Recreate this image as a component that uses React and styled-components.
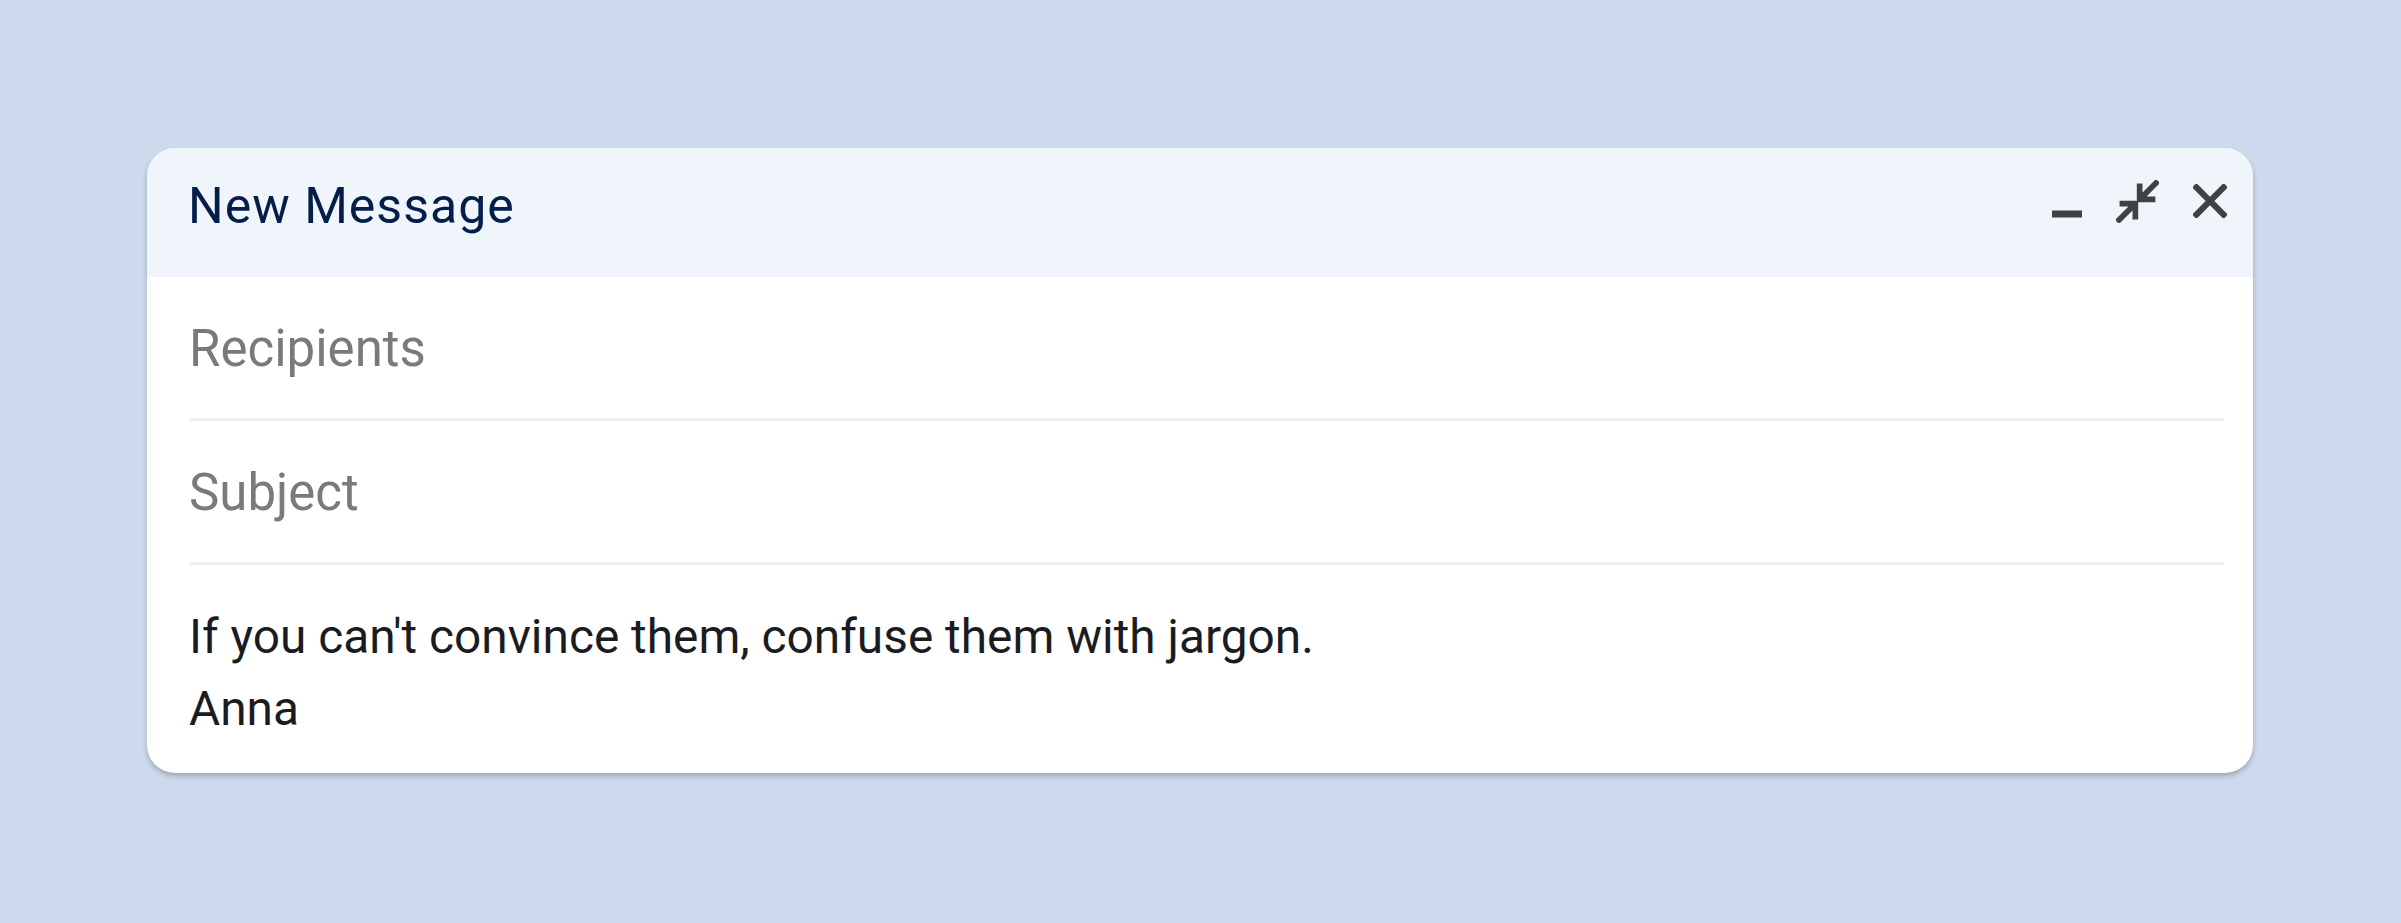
import React from "react";
import styled, { createGlobalStyle } from "styled-components";

const GlobalStyle = createGlobalStyle`
  html, body {
    margin: 0;
    padding: 0;
    background: #cdd9ec;
  }
  body {
    font-family: Roboto, "Liberation Sans", Arial, sans-serif;
  }
`;

const MinimizeIcon = () => (
  <svg width="30" height="34" viewBox="0 0 30 34">
    <rect x="0" y="26.5" width="30" height="7" fill="currentColor" />
  </svg>
);

const ExitFullIcon = () => (
  <svg width="43" height="43" viewBox="80 80 800 800">
    <path
      fill="currentColor"
      stroke="currentColor"
      strokeWidth="26"
      d="M136 880 80 824l264-264H160v-80h320v320h-80V616L136 880Zm344-400V160h80v184l264-264 56 56-264 264h184v80H480Z"
    />
  </svg>
);

const CloseIcon = () => (
  <svg width="34" height="34" viewBox="200 200 560 560">
    <path
      fill="currentColor"
      stroke="currentColor"
      strokeWidth="22"
      d="m256 760-56-56 224-224-224-224 56-56 224 224 224-224 56 56-224 224 224 224-56 56-224-224-224 224Z"
    />
  </svg>
);

const App = () => (
  <React.Fragment>
    <GlobalStyle />
    <Page>
      <Compose>
        <Header>
          <Title>New Message</Title>
          <Actions>
            <IconButton aria-label="Minimize">
              <MinimizeIcon />
            </IconButton>
            <IconButton aria-label="Exit full screen">
              <ExitFullIcon />
            </IconButton>
            <IconButton aria-label="Close">
              <CloseIcon />
            </IconButton>
          </Actions>
        </Header>
        <Fields>
          <Field>
            <Input placeholder="Recipients" />
          </Field>
          <Field>
            <Input placeholder="Subject" />
          </Field>
          <Body>
            If you can't convince them, confuse them with jargon.
            <br />
            Anna
          </Body>
        </Fields>
      </Compose>
    </Page>
  </React.Fragment>
);

export default App;

const Page = styled.div`
  min-height: 923px;
  padding: 148px 148px 0 147px;
  box-sizing: border-box;
`;

const Compose = styled.div`
  width: 2106px;
  background: #ffffff;
  border-radius: 28px;
  overflow: hidden;
  box-shadow: 0 3px 5px rgba(60, 64, 67, 0.32);
`;

const Header = styled.div`
  height: 129px;
  box-sizing: border-box;
  display: flex;
  align-items: flex-start;
  justify-content: space-between;
  padding: 22px 26px 0 41px;
  background: #f0f4fb;
`;

const Title = styled.h2`
  margin: 0;
  font-size: 50px;
  line-height: 72px;
  font-weight: 400;
  letter-spacing: 1px;
  color: #041e49;
`;

const Actions = styled.div`
  display: flex;
  align-items: center;
  gap: 34px;
  height: 42px;
  margin-top: 10px;
`;

const IconButton = styled.button`
  display: flex;
  align-items: center;
  justify-content: center;
  padding: 0;
  border: 0;
  background: none;
  color: #3f4242;
  cursor: pointer;
`;

const Fields = styled.div`
  padding: 0 29px 0 42px;
`;

const Field = styled.div`
  height: 144px;
  box-sizing: border-box;
  padding-top: 36px;
  border-bottom: 3px solid #eceff3;
`;

const Input = styled.input`
  display: block;
  width: 100%;
  height: 72px;
  padding: 0;
  border: 0;
  outline: none;
  background: transparent;
  font-family: Roboto, "Liberation Sans", Arial, sans-serif;
  font-size: 51px;
  line-height: 72px;
  color: #1f1f1f;
  &::placeholder {
    color: #7a7a7a;
  }
`;

const Body = styled.div`
  padding: 36px 0 28px;
  font-size: 47.8px;
  line-height: 72px;
  color: #1b1c22;
`;
